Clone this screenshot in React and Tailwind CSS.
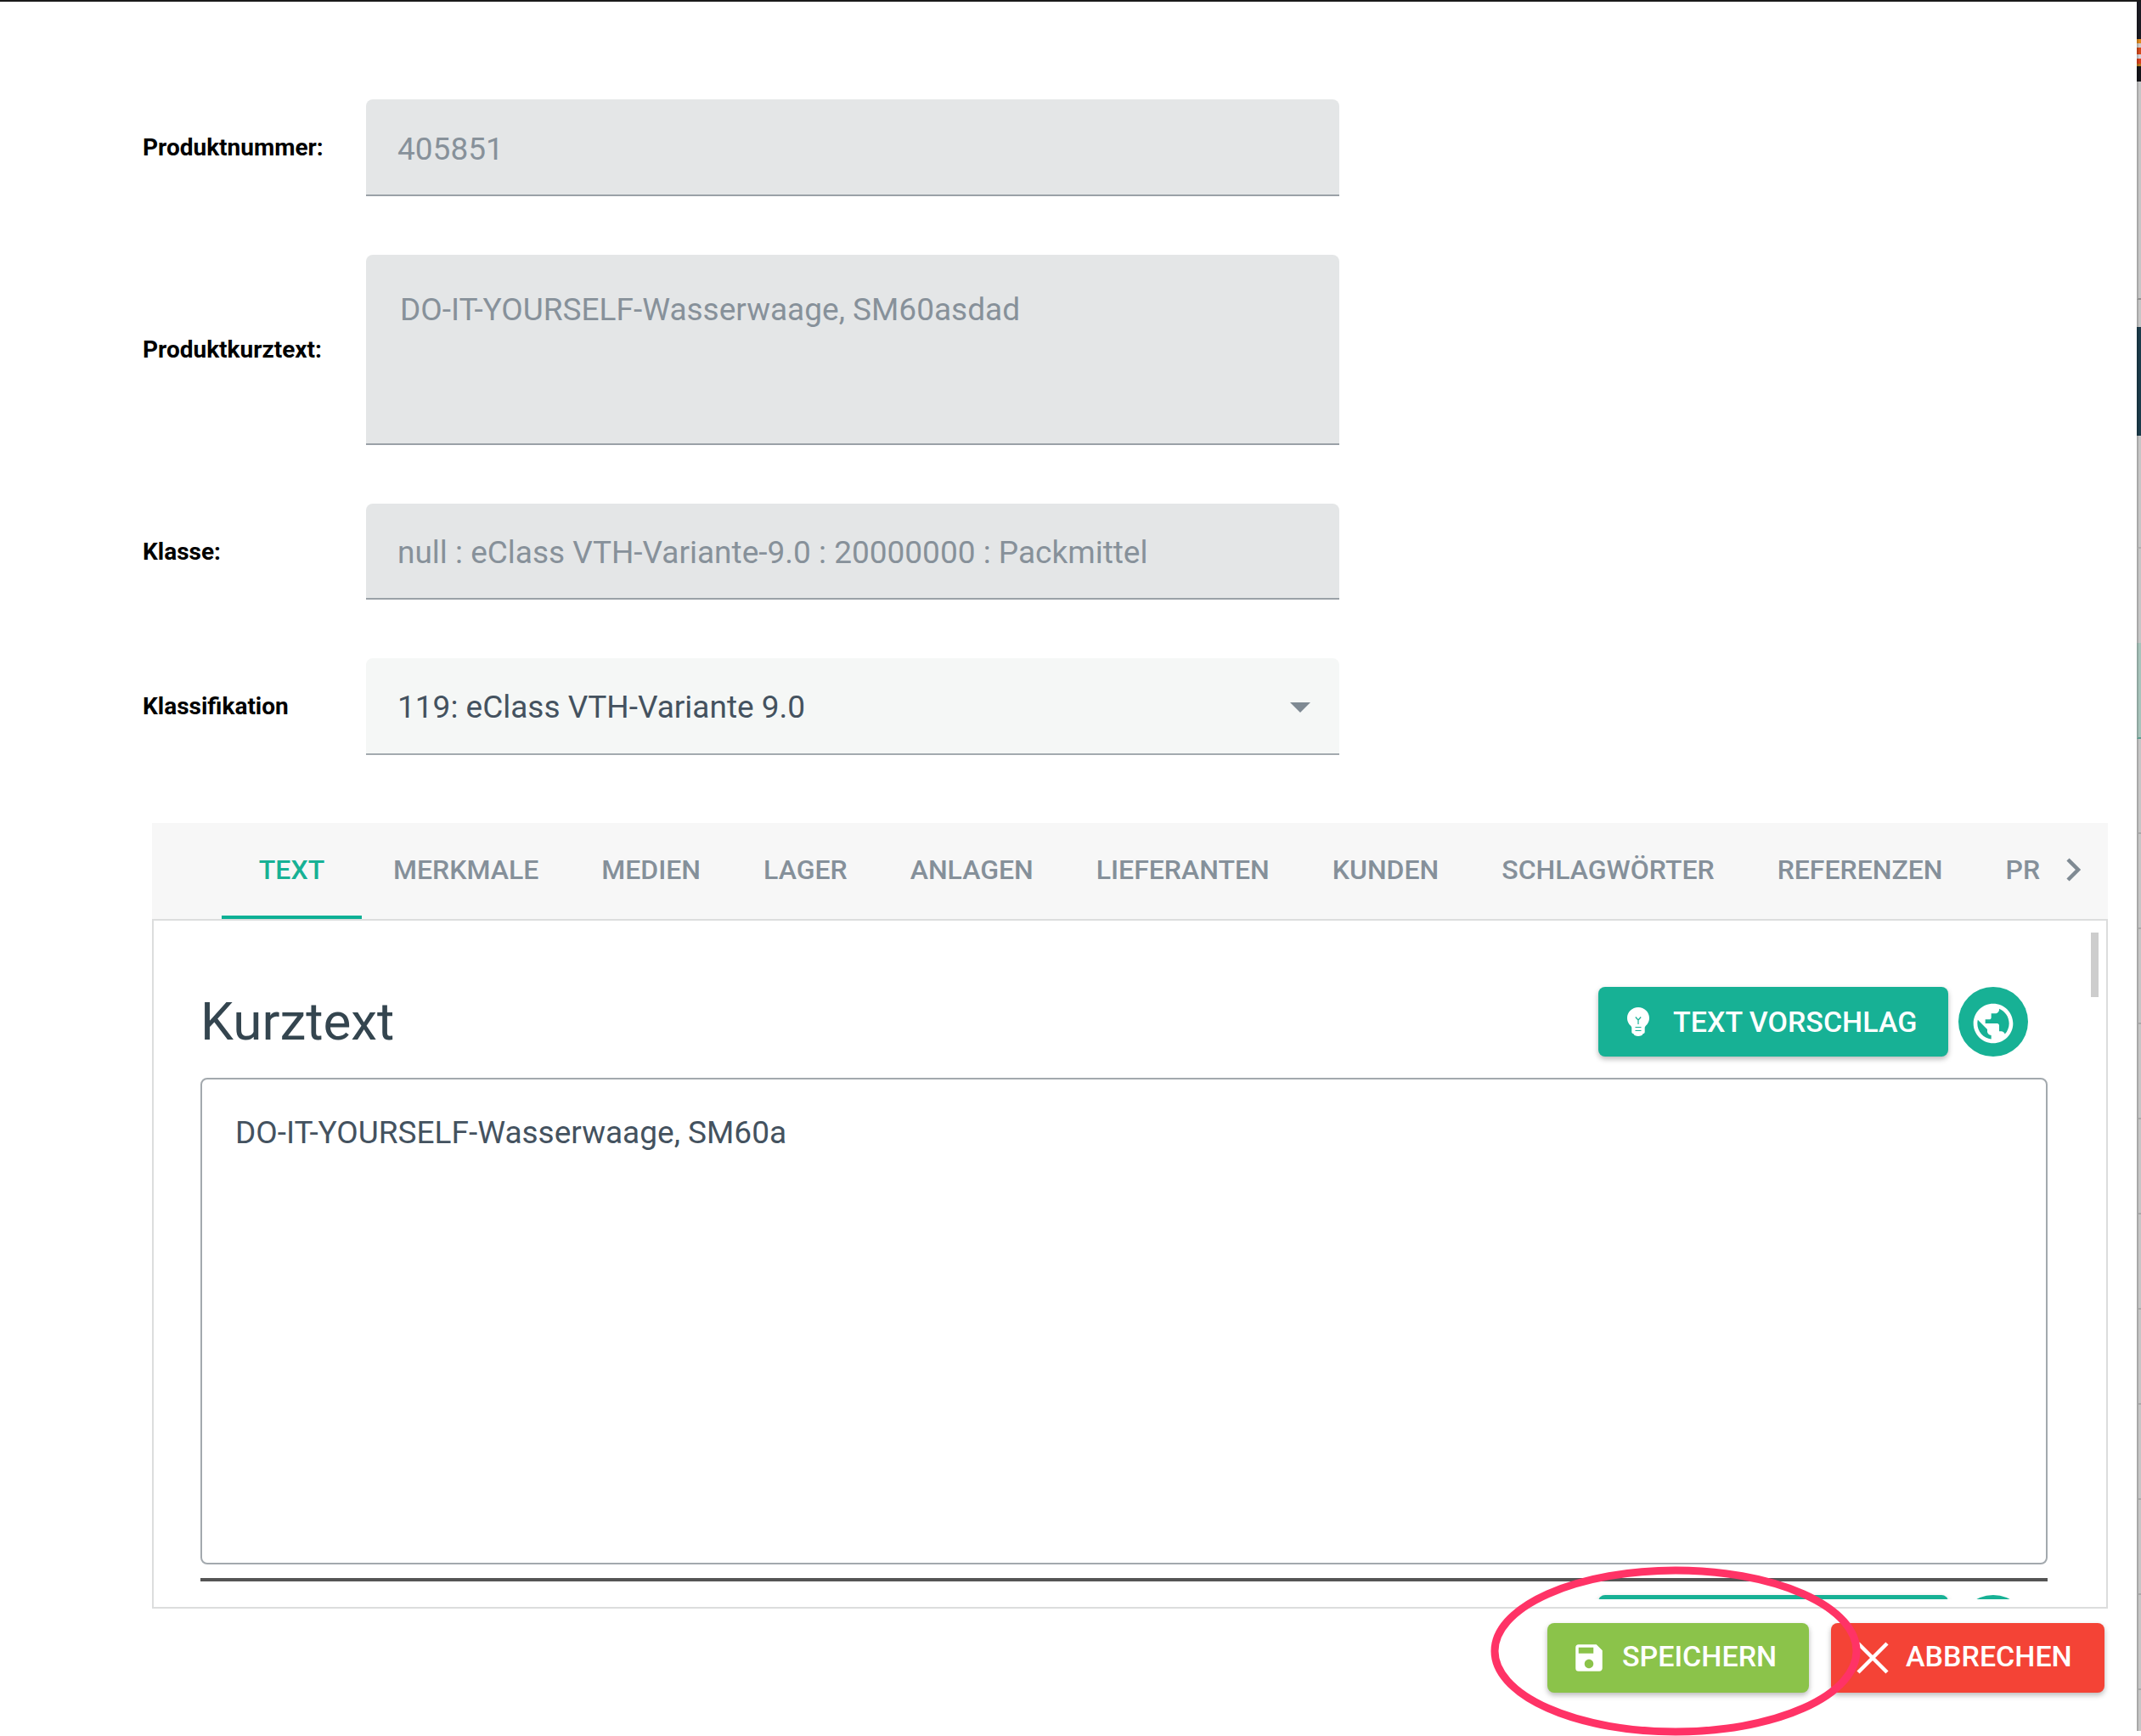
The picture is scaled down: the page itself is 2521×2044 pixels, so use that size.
import React from "react";
import { MdSave, MdPublic } from "react-icons/md";

const tabs = [
  "TEXT",
  "MERKMALE",
  "MEDIEN",
  "LAGER",
  "ANLAGEN",
  "LIEFERANTEN",
  "KUNDEN",
  "SCHLAGWÖRTER",
  "REFERENZEN",
  "PR",
];

const raised = "shadow-[0_3px_6px_rgba(0,0,0,0.28)]";

function BulbIcon() {
  return (
    <svg viewBox="0 0 26 34" className="h-[34px] w-[26px] shrink-0" aria-hidden="true">
      <path
        fill="currentColor"
        d="M13 0C5.800 0 0 5.600 0 12.500c0 4.700 2.300 7.500 4.500 9.700.6.6.8 1.200.8 2V29c0 1.400 1 2 2.200 2.300.4 1.700 2.700 2.700 5.500 2.700s5.100-1 5.500-2.700c1.200-.3 2.200-.9 2.200-2.300v-4.800c0-.8.2-1.400.8-2 2.200-2.200 4.500-5 4.500-9.700C26 5.600 20.200 0 13 0z"
      />
      <path
        fill="none"
        stroke="#17b195"
        strokeWidth="1.200"
        d="M9.800 11.500l3.200 3.500 3.200-3.500M13 15v5M9.500 23.500h7M9.500 27.500h7"
      />
    </svg>
  );
}

function Row({ id, label, children }) {
  return (
    <div className="flex items-center">
      <label htmlFor={id} className="w-[263px] shrink-0 text-[28px] leading-8 font-bold text-black">
        {label}
      </label>
      {children}
    </div>
  );
}

function SuggestButtons({ children }) {
  return (
    <div className="flex items-center gap-3">
      <button
        type="button"
        aria-label="Textvorschlag"
        className={`flex h-[82px] w-[412px] items-center gap-7 rounded-lg bg-[#17b195] pl-[34px] text-[34px] font-medium text-white ${raised}`}
      >
        {children}
      </button>
      <button
        type="button"
        aria-label="Sprache"
        className="flex size-[82px] items-center justify-center rounded-full bg-[#17b195] pt-1 text-white"
      >
        <MdPublic className="size-14" />
      </button>
    </div>
  );
}

function PageEdge() {
  const edge = "border-l-2 border-l-black/15";
  return (
    <div className="mb-[6px] flex w-[5px] shrink-0 flex-col bg-[#c6c6c6]" aria-hidden="true">
      <div className={`${edge} h-11 bg-[#1c1c24]`} />
      <div className={`${edge} h-[5px] bg-[#e08a1e]`} />
      <div className={`${edge} h-[5px] bg-[#cfcac6]`} />
      <div className={`${edge} h-2 bg-[#d4491c]`} />
      <div className={`${edge} h-[5px] bg-[#d3d3d8]`} />
      <div className={`${edge} h-1.5 bg-[#d9401c]`} />
      <div className={`${edge} h-[3px] bg-[#b9781f]`} />
      <div className={`${edge} h-[18px] bg-[#15151a]`} />
      <div className={`${edge} h-[257px] border-b-2 border-b-[#8f8f8f]`} />
      <div className={`${edge} h-8`} />
      <div className={`${edge} h-32 bg-[#1c3c4b]`} />
      <div className={`${edge} h-[133px] border-b-2 border-b-[#b0b0b0]`} />
      <div className={`${edge} h-[111px]`} />
      <div className={`${edge} h-[113px] border-b-2 border-b-[#5e9c90] bg-[#a8c4bb]`} />
      {Array.from({ length: 10 }, (_, i) => (
        <div key={i} className={`${edge} h-28 border-b-2 border-b-[#a9a9a9]`} />
      ))}
      <div className={`${edge} flex-1`} />
    </div>
  );
}

export default function App() {
  const field =
    "w-full max-w-[1146px] rounded-t-lg border-b-2 border-[#9aa1a7] bg-[#e4e6e7] text-[37px] text-[#87919a] outline-none";
  return (
    <div className="flex min-h-screen border-t-2 border-[#1a1a1a] bg-white font-['Roboto',sans-serif]">
      <main className="flex min-w-0 flex-1 flex-col pt-[115px] pb-[51px]">
        <form className="flex flex-col gap-[69px] pl-[168px]">
          <Row id="nummer" label="Produktnummer:">
            <input id="nummer" disabled defaultValue="405851" className={`${field} h-[114px] px-[37px] pt-1`} />
          </Row>
          <Row id="kurz" label="Produktkurztext:">
            <textarea
              id="kurz"
              disabled
              defaultValue="DO-IT-YOURSELF-Wasserwaage, SM60asdad"
              className={`${field} h-56 resize-none px-10 pt-[41px] leading-[48px]`}
            />
          </Row>
          <Row id="klasse" label="Klasse:">
            <input
              id="klasse"
              disabled
              defaultValue="null : eClass VTH-Variante-9.0 : 20000000 : Packmittel"
              className={`${field} h-[113px] px-[37px] pt-1`}
            />
          </Row>
          <Row id="klassifikation" label="Klassifikation">
            <div className="relative w-full max-w-[1146px]">
              <select
                id="klassifikation"
                className="block h-[114px] w-full appearance-none rounded-t-lg border-b-2 border-[#a3aaaf] bg-[#f5f7f6] px-[37px] pt-1 text-[37px] text-[#44525f] outline-none"
              >
                <option>119: eClass VTH-Variante 9.0</option>
              </select>
              <svg
                viewBox="0 0 24 12"
                className="pointer-events-none absolute top-[52px] right-[34px] h-3 w-6 text-[#7f8a93]"
                aria-hidden="true"
              >
                <path fill="currentColor" d="M0 0h24L12 12z" />
              </svg>
            </div>
          </Row>
        </form>

        <section className="mt-20 mr-[34px] ml-[179px]">
          <div className="flex h-[113px] items-stretch bg-[#f7f7f7] pl-[82px]">
            <div role="tablist" className="flex min-w-0 flex-1 overflow-hidden">
              {tabs.map((t, i) => (
                <button
                  key={t}
                  type="button"
                  role="tab"
                  aria-selected={i === 0}
                  className={
                    i === 0
                      ? "w-[165px] shrink-0 border-b-4 border-[#0db095] text-[32px] font-medium text-[#17b195]"
                      : "shrink-0 px-[37px] pb-1 text-[32px] font-medium text-[#85909a] last:pr-0"
                  }
                >
                  {t}
                </button>
              ))}
            </div>
            <button
              type="button"
              aria-label="Weitere Reiter"
              className="flex w-20 items-center justify-center pb-1 text-[#7f8a93]"
            >
              <svg viewBox="0 0 18 28" className="h-7 w-[18px]" aria-hidden="true">
                <path fill="none" stroke="currentColor" strokeWidth="4.500" d="M2 2l12 12L2 26" />
              </svg>
            </button>
          </div>

          <div className="flex h-[812px] border-2 border-[#dcdddd] pt-[14px] pb-[9px]">
            <div className="min-w-0 flex-1 overflow-hidden pr-[51px] pl-[55px]">
              <div className="flex items-center justify-between pt-16 pr-[23px]">
                <h2 className="text-[62px] leading-[82px] text-[#34454f]">Kurztext</h2>
                <SuggestButtons>
                  <BulbIcon />
                  TEXT VORSCHLAG
                </SuggestButtons>
              </div>
              <textarea
                aria-label="Kurztext"
                defaultValue="DO-IT-YOURSELF-Wasserwaage, SM60a"
                className="mt-[25px] block h-[573px] w-full resize-none rounded-lg border-2 border-[#a3a9ae] px-[39px] pt-[39px] text-[37px] leading-[48px] text-[#44525f] outline-none"
              />
              <hr className="mt-4 border-t-4 border-[#555555]" />
              <div className="flex justify-end pt-4 pr-[23px]">
                <SuggestButtons />
              </div>
            </div>
            <div className="mr-[9px] w-[9px] shrink-0">
              <div className="h-[76px] bg-[#cdcdcd]" />
            </div>
          </div>
        </section>

        <footer className="mt-[17px] mr-[38px] flex justify-end gap-[26px]">
          <div className="relative">
            <button
              type="button"
              className={`flex h-[82px] w-[308px] items-center gap-[18px] rounded-lg bg-[#8bc34a] pl-7 text-[34px] font-medium text-white ${raised}`}
            >
              <MdSave className="size-[42px] shrink-0" />
              <span className="pb-1">SPEICHERN</span>
            </button>
            <svg
              viewBox="0 0 436 200"
              className="pointer-events-none absolute -top-[67px] -left-[67px] z-10 h-[200px] w-[436px] max-w-none"
              aria-hidden="true"
            >
              <ellipse cx="218" cy="100" rx="213" ry="95" fill="none" stroke="#ff3366" strokeWidth="9" />
            </svg>
          </div>
          <button
            type="button"
            className={`flex h-[82px] w-[322px] items-center gap-5 rounded-lg bg-[#f44336] pl-[30px] text-[34px] font-medium text-white ${raised}`}
          >
            <svg viewBox="0 0 38 38" className="size-[38px] shrink-0" aria-hidden="true">
              <path fill="none" stroke="currentColor" strokeWidth="4.500" d="M2 2l34 34M36 2L2 36" />
            </svg>
            <span className="pb-1">ABBRECHEN</span>
          </button>
        </footer>
      </main>
      <PageEdge />
    </div>
  );
}
